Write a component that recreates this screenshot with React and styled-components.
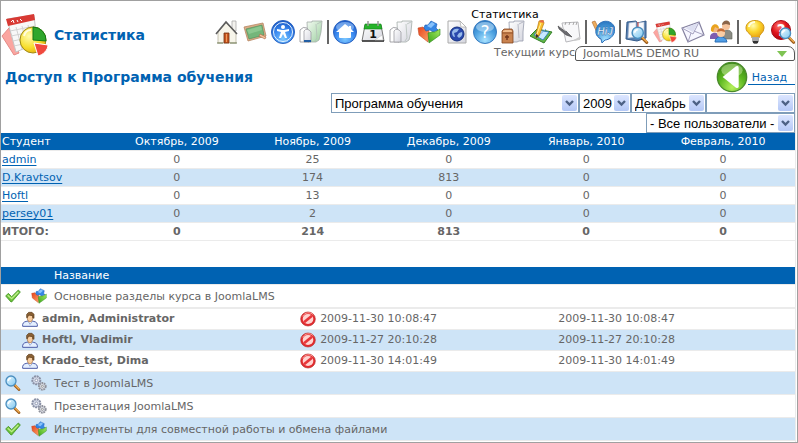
import React from "react";
import styled, { createGlobalStyle } from "styled-components";

const BLUE = "#0062b2";
const STRIPE = "#cee4f7";
const LINE = "#ebebeb";
const TEXT = "#666666";

const GlobalStyle = createGlobalStyle`
  * { box-sizing: border-box; }
  body {
    margin: 0;
    background: #fff;
    color: ${TEXT};
    font: 11px/14px Verdana, "DejaVu Sans", sans-serif;
  }
`;

const Frame = styled.div`
  border: 1px solid #a0a0a0;
  padding-right: 1px;
`;

const Page = styled.main`
  border-right: 1px solid ${LINE};
  padding: 8px 0 1px;
`;

const Header = styled.header`
  display: flex;
  justify-content: space-between;
`;

const Brand = styled.div`
  display: flex;
  align-items: center;
  gap: 5px;
`;

const Title = styled.h1`
  margin: 0;
  font-size: 14px;
  line-height: 18px;
  color: ${BLUE};
`;

const HeaderTools = styled.div`
  display: flex;
  flex-direction: column;
  flex: none;
`;

const SectionLabel = styled.div`
  color: #000;
  line-height: 11px;
  text-align: center;
`;

const Toolbar = styled.nav`
  display: flex;
  gap: 4px;
`;

const ToolButton = styled.button`
  width: 24px;
  height: 24px;
  padding: 0;
  border: 0;
  background: none;
  cursor: pointer;
`;

const Separator = styled.span`
  width: 2px;
  background: #666;
`;

const Svg = styled.svg`
  display: block;
  flex: none;
`;

const CourseRow = styled.div`
  display: flex;
  justify-content: flex-end;
  margin-top: 2px;
  line-height: 14px;
`;

const CourseBox = styled.div`
  display: grid;
  align-items: center;
  width: 220px;
  > * { grid-area: 1 / 1; }
  > svg { justify-self: end; margin-right: 8px; pointer-events: none; }
`;

const CourseSelect = styled.select`
  appearance: none;
  width: 100%;
  height: 15px;
  padding: 1px 20px 0 7px;
  border: 1px solid #555;
  border-radius: 7px 7px 2px 2px;
  background: #fff;
  color: ${TEXT};
  font: inherit;
  line-height: 12px;
`;

const HeadingRow = styled.div`
  display: flex;
  align-items: center;
  justify-content: space-between;
  height: 32px;
  padding-left: 4px;
`;

const Heading = styled.h2`
  margin: 0;
  font-size: 14px;
  line-height: 18px;
  color: ${BLUE};
`;

const BackLink = styled.a`
  display: flex;
  align-items: center;
  color: ${BLUE};
  text-decoration: none;
`;

const BackText = styled.span`
  padding: 2px 8px 0 4px;
  line-height: 12px;
  border-bottom: 1px solid ${BLUE};
`;

const Filters = styled.form`
  display: flex;
  flex-direction: column;
`;

const FilterRow = styled.div`
  display: flex;
  justify-content: flex-end;
`;

const SelectBox = styled.div`
  display: grid;
  align-items: center;
  width: ${(p) => p.$width}px;
  > * { grid-area: 1 / 1; }
  > svg { justify-self: end; margin-right: 2px; pointer-events: none; }
`;

const Select = styled.select`
  appearance: none;
  width: 100%;
  height: 20px;
  padding: 1px 17px 0 3px;
  border: 1px solid #7f9db9;
  border-radius: 0;
  background: #fff;
  color: #000;
  font: 13px/16px Arial, "Liberation Sans", sans-serif;
`;

const Table = styled.table`
  width: 100%;
  border-collapse: separate;
  border-spacing: 0;
  table-layout: fixed;
`;

const Col = styled.col`
  width: ${(p) => p.$width};
`;

const HeadRow = styled.tr`
  background: ${BLUE};
  color: #fff;
`;

const HeadCell = styled.th`
  height: 18px;
  padding: 1px 1px 0;
  border-bottom: 1px solid ${LINE};
  font-weight: normal;
  text-align: ${(p) => (p.$left ? "left" : "center")};
  &:last-child { padding-right: 5px; }
`;

const Row = styled.tr`
  background: ${(p) => (p.$striped ? STRIPE : "#fff")};
  font-weight: ${(p) => (p.$bold ? "bold" : "normal")};
`;

const Cell = styled.td`
  height: 18px;
  padding: 1px 1px 0;
  border-bottom: 1px solid ${LINE};
  text-align: ${(p) => (p.$left ? "left" : "center")};
  &:last-child { padding-right: 5px; }
`;

const StudentLink = styled.a`
  color: ${BLUE};
  text-decoration: underline;
  text-underline-offset: 2px;
`;

const Materials = styled.section`
  margin-top: 26px;
`;

const MaterialCell = styled.td`
  height: ${(p) => (p.$open ? 24 : 23)}px;
  padding: 1px 1px 0;
  border-bottom: ${(p) => (p.$open ? 2 : 1)}px solid ${LINE};
`;

const IconCell = styled(MaterialCell)`
  padding: 0 4px;
`;

const VisitCell = styled.td`
  height: 21px;
  padding: 0 1px;
  border-bottom: 1px solid ${LINE};
`;

const WithIcon = styled.div`
  display: flex;
  align-items: center;
  gap: 4px;
  padding-left: ${(p) => p.$indent || 0}px;
  font-weight: ${(p) => (p.$bold ? "bold" : "normal")};
`;

/* ---------- icons ---------- */

const Gradients = () => (
  <Svg width="0" height="0" aria-hidden="true" focusable="false">
    <defs>
      <radialGradient id="blueBall" cx="50%" cy="80%" r="75%">
        <stop offset="0" stopColor="#7cc8ff" />
        <stop offset=".55" stopColor="#3b8af0" />
        <stop offset="1" stopColor="#1c5cc8" />
      </radialGradient>
      <radialGradient id="skyBall" cx="50%" cy="85%" r="80%">
        <stop offset="0" stopColor="#a8e2ff" />
        <stop offset=".6" stopColor="#4ba0e0" />
        <stop offset="1" stopColor="#2f7cc4" />
      </radialGradient>
      <radialGradient id="greenBall" cx="50%" cy="85%" r="80%">
        <stop offset="0" stopColor="#b6f05c" />
        <stop offset=".55" stopColor="#5fb922" />
        <stop offset="1" stopColor="#3a8a14" />
      </radialGradient>
      <radialGradient id="redBall" cx="40%" cy="30%" r="75%">
        <stop offset="0" stopColor="#ff7a70" />
        <stop offset=".5" stopColor="#e0141c" />
        <stop offset="1" stopColor="#a8000c" />
      </radialGradient>
      <radialGradient id="bulbGlow" cx="40%" cy="30%" r="70%">
        <stop offset="0" stopColor="#fffbb0" />
        <stop offset=".5" stopColor="#fcd62c" />
        <stop offset="1" stopColor="#e8a010" />
      </radialGradient>
      <radialGradient id="pieYellow" cx="35%" cy="35%" r="75%">
        <stop offset="0" stopColor="#fffcae" />
        <stop offset=".6" stopColor="#f8de2c" />
        <stop offset="1" stopColor="#e2a80c" />
      </radialGradient>
      <linearGradient id="paper" x1="0" y1="0" x2="1" y2="1">
        <stop offset="0" stopColor="#ffffff" />
        <stop offset="1" stopColor="#d4d5de" />
      </linearGradient>
      <linearGradient id="greenPaper" x1="0" y1="0" x2="1" y2="1">
        <stop offset="0" stopColor="#f4faf2" />
        <stop offset="1" stopColor="#9cd0a0" />
      </linearGradient>
      <linearGradient id="redFace" x1="0" y1="0" x2="1" y2="1">
        <stop offset="0" stopColor="#e8421c" />
        <stop offset="1" stopColor="#fba468" />
      </linearGradient>
      <linearGradient id="greenFace" x1="0" y1="1" x2="1" y2="0">
        <stop offset="0" stopColor="#3aa51c" />
        <stop offset="1" stopColor="#a4ea60" />
      </linearGradient>
      <linearGradient id="arrowFace" x1="0" y1="0" x2="0" y2="1">
        <stop offset="0" stopColor="#dce6ff" />
        <stop offset="1" stopColor="#b4c8f6" />
      </linearGradient>
      <linearGradient id="lens" x1="0" y1="0" x2="1" y2="1">
        <stop offset="0" stopColor="#f0fbff" />
        <stop offset="1" stopColor="#7cc6f0" />
      </linearGradient>
    </defs>
  </Svg>
);

const Glyph = ({ size = 24, box = 24, children }) => (
  <Svg width={size} height={size} viewBox={`0 0 ${box} ${box}`} aria-hidden="true">
    {children}
  </Svg>
);

const Report = () => (
  <>
    <path d="M1 25 8 17 18 42 13 44Z" fill="#fba5a0" stroke="#e58a86" />
    <path d="M6 8 33 4 36 32 15 41Z" fill="#f8f8f8" stroke="#c4c4c4" />
    <path d="M5 8 33 3 34 9 7 15Z" fill="#d83a34" />
    <path d="m10 11 2-2 1 3m3-3 1 2m2-3 2 2" stroke="#fff" fill="none" />
    <path d="m9 20 25-5M10 25l25-5M12 30l23-5M13 35l22-5M15 16l6 22M21 15l5 20M27 14l4 18" stroke="#d2d2d2" fill="none" />
    <circle cx="32" cy="29" r="13" fill="url(#pieYellow)" stroke="#9f8917" />
    <path d="M32 29V16A13 13 0 0 1 45 30Z" fill="#2fa62c" stroke="#147716" />
    <path d="m33 32 14 2c0 5-5 10-10 11Z" fill="#f0493e" stroke="#fff" />
    <path d="M23 25c1-4 4-6 7-6" stroke="#fffde0" strokeWidth="2" fill="none" />
  </>
);

const Pages = ({ back }) => (
  <>
    <path d="M8 2h5V1h10l-1 11-2 8-3 2H9Z" fill={back} stroke="#a3aca8" strokeWidth=".8" />
    <path d="m17 4 1 14-2 3m2-17 4-2" stroke="#b4bfb9" fill="none" strokeWidth=".8" />
    <path d="M1 10q3-4 7-2l2 4v10H1Z" fill="#fff" stroke="#8d8d93" strokeWidth=".8" />
    <path d="M5 11q3-4 7 1v10H5Z" fill="url(#paper)" stroke="#9c9ca2" strokeWidth=".8" />
  </>
);

const Cube = () => (
  <>
    <path d="M1 8 6 7l2 2 3-1 1 4-1 10L2 15Z" fill="url(#redFace)" stroke="#c24a24" strokeWidth=".6" />
    <path d="m8 5 3 0 3-4 6 3-1 4 2 2-5 2-3-2-4 1-2-3Z" fill="#3587e4" stroke="#1759b2" strokeWidth=".6" />
    <path d="m10 6 5-4 3 2-4 4Z" fill="#86c1fb" />
    <path d="m11 13 4-1 3 0 5-3v6L12 23Z" fill="url(#greenFace)" stroke="#2c8617" strokeWidth=".6" />
  </>
);

const Magnifier = () => (
  <>
    <path d="m14 15 7 7" stroke="#9a5b1c" strokeWidth="4" strokeLinecap="round" />
    <path d="m15 15 6 6" stroke="#f0aa4c" strokeWidth="2" strokeLinecap="round" />
    <circle cx="9" cy="9" r="7.5" fill="url(#lens)" stroke="#4b8fc0" strokeWidth="2" />
    <path d="M5 9c0-3 2-4 4-4" stroke="#fff" strokeWidth="2" fill="none" />
  </>
);

const Pen = () => (
  <>
    <path d="m10 1 4-1 1 3-5 13-3 2v-4Z" fill="#fbc02d" stroke="#b67a10" strokeWidth=".7" />
    <path d="m10 1 4-1 1 3-4-1Z" fill="#e8684c" />
    <path d="m7 14 3 2-3 2Z" fill="#38312a" />
    <path d="m12 3-4 11" stroke="#fff3a0" />
  </>
);

const ICONS = {
  house: (
    <>
      <path d="M17 1h4v10h-4Z" fill="#f3f2ee" stroke="#aaa" strokeWidth=".8" />
      <path d="M3 12 11 3l10 9v11H3Z" fill="#f7f5ea" stroke="#b9b4a2" strokeWidth=".8" />
      <path d="m1 14 10-12 11 12" fill="none" stroke="#5c5c5c" strokeWidth="1.6" />
      <path d="M9 13h5v10H9Z" fill="#c75620" stroke="#73300f" strokeWidth=".8" />
      <path d="M11.5 14v8" stroke="#f09a5c" />
      <path d="M2 23h6m7 0h7" stroke="#6e7b52" />
    </>
  ),
  board: (
    <>
      <path d="M1 7 20 3l3 13-18 5Z" fill="#dcae88" stroke="#b58562" strokeWidth=".8" />
      <path d="m3 9 16-4 2 10-15 4Z" fill="#74b67a" stroke="#4b8c5a" strokeWidth=".6" />
      <path d="m4 10 14-4 1 4-13 4Z" fill="#8cc890" />
      <path d="m17 14 6 3-1 2-6-3Z" fill="#f5c39c" stroke="#a76542" strokeWidth=".6" />
    </>
  ),
  access: (
    <>
      <circle cx="12" cy="12" r="11.5" fill="url(#blueBall)" stroke="#2a62c0" />
      <circle cx="12" cy="12" r="9.5" fill="none" stroke="#e8f5ff" />
      <circle cx="12" cy="7" r="2" fill="#fff" />
      <path d="m6 9 5 1h2l5-1v2l-4 1 2 6h-2l-2-4-2 4H8l2-6-4-1Z" fill="#fff" />
    </>
  ),
  greenPages: (
    <>
      <Pages back="url(#greenPaper)" />
      <path d="M5 20h7v2H5Z" fill="#245fa4" />
    </>
  ),
  home: (
    <>
      <circle cx="12" cy="12" r="11.5" fill="url(#blueBall)" stroke="#2a62c0" />
      <ellipse cx="12" cy="7" rx="9" ry="5" fill="#b9dcff" opacity=".5" />
      <path d="m12 4-9 8h3v5q0 1 1 1h10q1 0 1-1v-5h3l-3-3V6h-2v1Z" fill="#fff" />
    </>
  ),
  calendar: (
    <>
      <path d="M4 5h16l3 16H1Z" fill="url(#paper)" stroke="#777" />
      <path d="M4 4h16l1 5H3Z" fill="#25b329" stroke="#138217" strokeWidth=".6" />
      <path d="M7 1v5m10-5v5" stroke="#999" strokeWidth="1.5" />
      <path d="M1 21h22" stroke="#333" strokeWidth="1.5" />
      <path d="m14 20 7-5 1 5Z" fill="#fff" stroke="#bbb" strokeWidth=".5" />
      <text x="12" y="18" textAnchor="middle" fontFamily="DejaVu Sans" fontSize="11" fontWeight="bold" fill="#111">1</text>
    </>
  ),
  grayPages: <Pages back="url(#paper)" />,
  cube: <Cube />,
  webPage: (
    <>
      <path d="M3 1h12l6 6v16H3Z" fill="url(#paper)" stroke="#aaa" />
      <path d="m15 1 1 6h5Z" fill="#fff" stroke="#aaa" strokeWidth=".7" />
      <circle cx="12" cy="14" r="7" fill="#2949ad" stroke="#15307e" />
      <path d="M7 12c1-3 4-4 7-3l-2 3-3 1 1 4c-2 0-3-2-3-5Zm7 1 3-1c1 3-1 5-3 6l-2-2Z" fill="#98bbea" />
    </>
  ),
  help: (
    <>
      <circle cx="12" cy="12" r="11.5" fill="url(#skyBall)" stroke="#377bc0" />
      <ellipse cx="12" cy="7" rx="9" ry="5" fill="#d2edff" opacity=".5" />
      <text x="12" y="18" textAnchor="middle" fontFamily="DejaVu Sans" fontSize="17" fill="#fff">?</text>
    </>
  ),
  box: (
    <>
      <path d="M8 2h5V1h10l-1 11v9h-4l-2 1H9Z" fill="url(#paper)" stroke="#969aab" strokeWidth=".8" />
      <path d="m17 4 1 14m0-14 4-2" fill="none" stroke="#b7b9c5" />
      <path d="m1 11 2-2h8l1 2v12H1Z" fill="#c98350" stroke="#824420" strokeWidth=".8" />
      <path d="M1 13h11" stroke="#8c4a22" strokeWidth=".8" />
      <path d="M6 15v5m-2-3h4" stroke="#71351a" strokeWidth="1.4" />
      <path d="m2 11 2-1h6l1 1v1H2Z" fill="#f0bc8c" />
    </>
  ),
  notebook: (
    <>
      <path d="m1 16 7-7 15 3-8 11Z" fill="#63b744" stroke="#327f29" />
      <path d="m5 15 4-5 11 2-6 8Z" fill="#c8e9ff" stroke="#3584b7" />
      <path d="m9 16 8-7" stroke="#75a3d5" />
      <Pen />
    </>
  ),
  note: (
    <>
      <path d="m5 3 16-1 2 17-14 3Z" fill="#f8f8fa" stroke="#b8b8bc" />
      <path d="m8 5 1-3m3 3 1-3m3 3 1-3m2 3 1-3" stroke="#999" strokeWidth=".8" />
      <path d="m1 6 8 5 6 6-6-2-7-6Z" fill="#6b6b70" stroke="#333" strokeWidth=".5" />
      <path d="m2 6 7 5" stroke="#ddd" />
      <path d="m22 17-7 4 8-1Z" fill="#ccc" />
    </>
  ),
  chat: (
    <>
      <path d="m1 2 3-1 8 16-3 2Z" fill="#eead5e" stroke="#a9642a" strokeWidth=".6" />
      <path d="M6 7c3-7 13-8 17-1 3 8-4 14-9 14l-3 3-1-4C4 16 4 11 6 7Z" fill="url(#skyBall)" stroke="#2f72bb" />
      <text x="14" y="15" textAnchor="middle" fontFamily="Liberation Sans" fontSize="10" fontStyle="italic" fontWeight="bold" fill="#fff" stroke="#245fa4" strokeWidth=".4">HiJ</text>
    </>
  ),
  bookSearch: (
    <>
      <path d="m2 2 9-1 1 2 9-2v17l-9 3-11-2Z" fill="#567eaf" stroke="#345b8a" />
      <path d="m4 3 7-1v15l-8 1Zm9 0 6-1v15l-6 1Z" fill="#f7f9fd" stroke="#aab9ce" strokeWidth=".6" />
      <path d="M13 2v6" stroke="#df4b41" />
      <g transform="translate(6 6) scale(.75)"><Magnifier /></g>
    </>
  ),
  report: <g transform="scale(.5)"><Report /></g>,
  mail: (
    <>
      <path d="m1 8 17-6 5 13-16 7Z" fill="#f7f7ff" stroke="#8582a0" strokeWidth="1.2" />
      <path d="m1 8 11 6 6-12M7 22l3-9m3-2 10 4" fill="none" stroke="#a5a2c0" />
      <path d="m4 8 13-5-5 9Z" fill="#dddff1" />
    </>
  ),
  people: (
    <>
      <path d="M13 13c2-4 8-4 10 0v6h-9Z" fill="#8b8c84" stroke="#62645a" strokeWidth=".6" />
      <circle cx="17" cy="6" r="4" fill="#f6c39c" />
      <path d="M13 5c0-6 9-6 8 0l-4-1Z" fill="#8b6448" />
      <path d="M1 17c0-5 8-6 9-1v3H1Z" fill="#7f5cb0" />
      <circle cx="6" cy="9" r="3.5" fill="#f3b781" />
      <path d="M2 11c-1-8 8-9 8-2L6 7l-2 5Z" fill="#e9a31e" />
      <path d="M6 22c0-7 11-7 12 0Z" fill="#4f9ee7" stroke="#2c6eb5" />
      <circle cx="12" cy="13" r="4" fill="#f9cda4" />
      <path d="M8 12c0-5 8-5 8 0l-4-1Z" fill="#c56c35" />
    </>
  ),
  bulb: (
    <>
      <path d="M3 8C3-2 21-2 21 8c0 5-5 6-5 10H9C9 14 3 13 3 8Z" fill="url(#bulbGlow)" stroke="#d09618" />
      <path d="M6 7c0-3 3-5 6-5" stroke="#fffde0" strokeWidth="2" fill="none" />
      <path d="M9 17h7v4l-2 3h-3l-2-3Z" fill="#777" />
      <path d="M9 18h7m-7 2h7" stroke="#ddd" />
      <path d="M10 22h5" stroke="#333" strokeWidth="2" />
    </>
  ),
  helpSearch: (
    <>
      <circle cx="10" cy="10" r="9.5" fill="url(#redBall)" stroke="#a80c18" />
      <text x="10" y="16" textAnchor="middle" fontFamily="DejaVu Sans" fontSize="15" fontWeight="bold" fill="#fff">?</text>
      <g transform="translate(8 7) scale(.7)"><Magnifier /></g>
    </>
  ),
  magnifier: <Magnifier />,
  check: (
    <>
      <path d="m1 12 4-4 5 5L20 3l3 3-13 15H9Z" fill="#6cc23a" stroke="#3f8f22" strokeWidth="1.2" />
      <path d="m4 11 6 5L20 6" stroke="#bdee88" strokeWidth="2" fill="none" />
    </>
  ),
  gears: (
    <>
      <circle cx="8" cy="8" r="6" fill="#d6dbe9" stroke="#8a91a6" strokeWidth="3" strokeDasharray="3 1" />
      <circle cx="8" cy="8" r="2" fill="#fff" stroke="#747d98" />
      <circle cx="17" cy="17" r="5" fill="#d9dce4" stroke="#8f919b" strokeWidth="3" strokeDasharray="2.6 1" />
      <circle cx="17" cy="17" r="1.5" fill="#fff" stroke="#777" />
    </>
  ),
  user: (
    <>
      <path d="M1 23v-3c1-4 4-4 8-5h6c4 1 7 1 8 5v3Z" fill="#e4efff" stroke="#4c5ca8" strokeWidth="1.5" />
      <path d="m9 15 3 5 4-5" fill="#fff" stroke="#7289c7" />
      <path d="M8 6h8v6l-2 4h-4l-2-4Z" fill="#f8cd9e" stroke="#a36d3c" />
      <path d="M7 10V5l3-3h5l3 3v6l-2-1V7l-6-1-2 4Z" fill="#8a6134" stroke="#5c3d1c" />
    </>
  ),
  ban: (
    <>
      <ellipse cx="12" cy="12" rx="11" ry="10.5" fill="#e32a2e" stroke="#b5322f" />
      <ellipse cx="12" cy="12" rx="8" ry="7.5" fill="#ffd4d1" />
      <path d="M6 17 18 7" stroke="#e6363a" strokeWidth="4" />
      <path d="M4 8c3-6 12-7 16-2" fill="none" stroke="#ff9f9a" strokeWidth="1.5" />
    </>
  ),
};

const SmallIcon = ({ name }) => <Glyph size={16}>{ICONS[name]}</Glyph>;

const DropArrow = () => (
  <Svg width="15" height="16" viewBox="0 0 15 16" aria-hidden="true">
    <rect x="0" y="0" width="15" height="16" rx="2" fill="url(#arrowFace)" />
    <path d="m4 6 3.5 3.5L11 6" fill="none" stroke="#4d6185" strokeWidth="2.4" />
  </Svg>
);

/* ---------- data ---------- */

const TOOLS = [
  ["house", "Главная"],
  ["board", "Курсы"],
  ["access", "Доступность"],
  ["greenPages", "Файлы"],
  null,
  ["home", "Домашняя страница курса"],
  ["calendar", "Календарь"],
  ["grayPages", "Документы"],
  ["cube", "Программа обучения"],
  ["webPage", "Ссылки"],
  ["help", "Тесты"],
  ["box", "Dropbox"],
  ["notebook", "Домашние задания"],
  ["note", "Журнал"],
  null,
  ["chat", "Чат"],
  null,
  ["bookSearch", "Посещаемость"],
  ["report", "Статистика"],
  ["mail", "Почта"],
  ["people", "Пользователи"],
  null,
  ["bulb", "Подсказка"],
  ["helpSearch", "Помощь"],
];

const MONTHS = ["Октябрь, 2009", "Ноябрь, 2009", "Декабрь, 2009", "Январь, 2010", "Февраль, 2010"];

const STUDENTS = [
  ["admin", 0, 25, 0, 0, 0],
  ["D.Kravtsov", 0, 174, 813, 0, 0],
  ["Hoftl", 0, 13, 0, 0, 0],
  ["persey01", 0, 2, 0, 0, 0],
];

const TOTALS = [0, 214, 813, 0, 0];

const MATERIALS = [
  {
    status: "check",
    kind: "cube",
    name: "Основные разделы курса в JoomlaLMS",
    visits: [
      ["admin, Administrator", "2009-11-30 10:08:47"],
      ["Hoftl, Vladimir", "2009-11-27 20:10:28"],
      ["Krado_test, Dima", "2009-11-30 14:01:49"],
    ],
  },
  { status: "magnifier", kind: "gears", name: "Тест в JoomlaLMS", striped: true },
  { status: "magnifier", kind: "gears", name: "Презентация JoomlaLMS" },
  { status: "check", kind: "cube", name: "Инструменты для совместной работы и обмена файлами", striped: true },
];

const Filter = ({ label, value, width }) => (
  <SelectBox $width={width}>
    <Select aria-label={label} defaultValue={value}>
      <option value={value}>{value}</option>
    </Select>
    <DropArrow />
  </SelectBox>
);

const AttendanceTable = () => (
  <Table>
    <colgroup>
      <Col $width="13.6%" />
      <Col $width="17.1%" />
      <Col $width="17.1%" />
      <Col $width="17.2%" />
      <Col $width="17.4%" />
      <Col />
    </colgroup>
    <thead>
      <HeadRow>
        <HeadCell scope="col" $left>Студент</HeadCell>
        {MONTHS.map((month) => (
          <HeadCell key={month} scope="col">{month}</HeadCell>
        ))}
      </HeadRow>
    </thead>
    <tbody>
      {STUDENTS.map(([name, ...counts], i) => (
        <Row key={name} $striped={i % 2 === 1}>
          <Cell $left>
            <StudentLink href="#">{name}</StudentLink>
          </Cell>
          {counts.map((count, k) => (
            <Cell key={MONTHS[k]}>{count}</Cell>
          ))}
        </Row>
      ))}
      <Row $bold>
        <Cell $left>ИТОГО:</Cell>
        {TOTALS.map((total, k) => (
          <Cell key={MONTHS[k]}>{total}</Cell>
        ))}
      </Row>
    </tbody>
  </Table>
);

const MaterialsTable = () => (
  <Table>
    <colgroup>
      <Col $width="26px" />
      <Col $width="26px" />
      <Col $width="31%" />
      <Col $width="32.5%" />
      <Col />
    </colgroup>
    <thead>
      <HeadRow>
        <HeadCell />
        <HeadCell />
        <HeadCell scope="col" colSpan={3} $left>Название</HeadCell>
      </HeadRow>
    </thead>
    <tbody>
      {MATERIALS.map(({ status, kind, name, striped, visits = [] }) => (
        <React.Fragment key={name}>
          <Row $striped={striped}>
            <IconCell $open={visits.length > 0}><SmallIcon name={status} /></IconCell>
            <IconCell $open={visits.length > 0}><SmallIcon name={kind} /></IconCell>
            <MaterialCell colSpan={3} $open={visits.length > 0}>{name}</MaterialCell>
          </Row>
          {visits.map(([user, time], i) => (
            <Row key={user} $striped={i % 2 === 1}>
              <VisitCell colSpan={3}>
                <WithIcon $indent={20} $bold><SmallIcon name="user" />{user}</WithIcon>
              </VisitCell>
              <VisitCell>
                <WithIcon><SmallIcon name="ban" />{time}</WithIcon>
              </VisitCell>
              <VisitCell>{time}</VisitCell>
            </Row>
          ))}
        </React.Fragment>
      ))}
    </tbody>
  </Table>
);

export default function App() {
  return (
    <Frame>
      <GlobalStyle />
      <Gradients />
      <Page>
        <Header>
          <Brand>
            <Glyph size={48} box={48}><Report /></Glyph>
            <Title>Статистика</Title>
          </Brand>
          <HeaderTools>
            <SectionLabel>Статистика</SectionLabel>
            <Toolbar>
              {TOOLS.map((tool, i) =>
                tool ? (
                  <ToolButton key={tool[0]} type="button" aria-label={tool[1]}>
                    <Glyph>{ICONS[tool[0]]}</Glyph>
                  </ToolButton>
                ) : (
                  <Separator key={i} />
                )
              )}
            </Toolbar>
            <CourseRow>
              <label htmlFor="course">Текущий курс</label>
              <CourseBox>
                <CourseSelect id="course" defaultValue="demo">
                  <option value="demo">JoomlaLMS DEMO RU</option>
                </CourseSelect>
                <Svg width="10" height="6" viewBox="0 0 10 6" aria-hidden="true">
                  <path d="M0 0h10L5 6Z" fill="#7ec353" />
                </Svg>
              </CourseBox>
            </CourseRow>
          </HeaderTools>
        </Header>

        <HeadingRow>
          <Heading>Доступ к Программа обучения</Heading>
          <BackLink href="#">
            <Glyph size={32}>
              <circle cx="12" cy="12" r="11" fill="url(#greenBall)" stroke="#4a8a2c" />
              <ellipse cx="12" cy="7" rx="8" ry="5" fill="#e0f9b8" opacity=".45" />
              <path d="M5 12 15 4q2-1 2 1v14q0 2-2 1Z" fill="#fff" />
            </Glyph>
            <BackText>Назад</BackText>
          </BackLink>
        </HeadingRow>

        <Filters>
          <FilterRow>
            <Filter label="Раздел" value="Программа обучения" width={248} />
            <Filter label="Год" value="2009" width={52} />
            <Filter label="Месяц" value="Декабрь" width={75} />
            <Filter label="День" value="" width={89} />
          </FilterRow>
          <FilterRow>
            <Filter label="Пользователи" value="- Все пользователи -" width={149} />
          </FilterRow>
        </Filters>

        <AttendanceTable />
        <Materials>
          <MaterialsTable />
        </Materials>
      </Page>
    </Frame>
  );
}
